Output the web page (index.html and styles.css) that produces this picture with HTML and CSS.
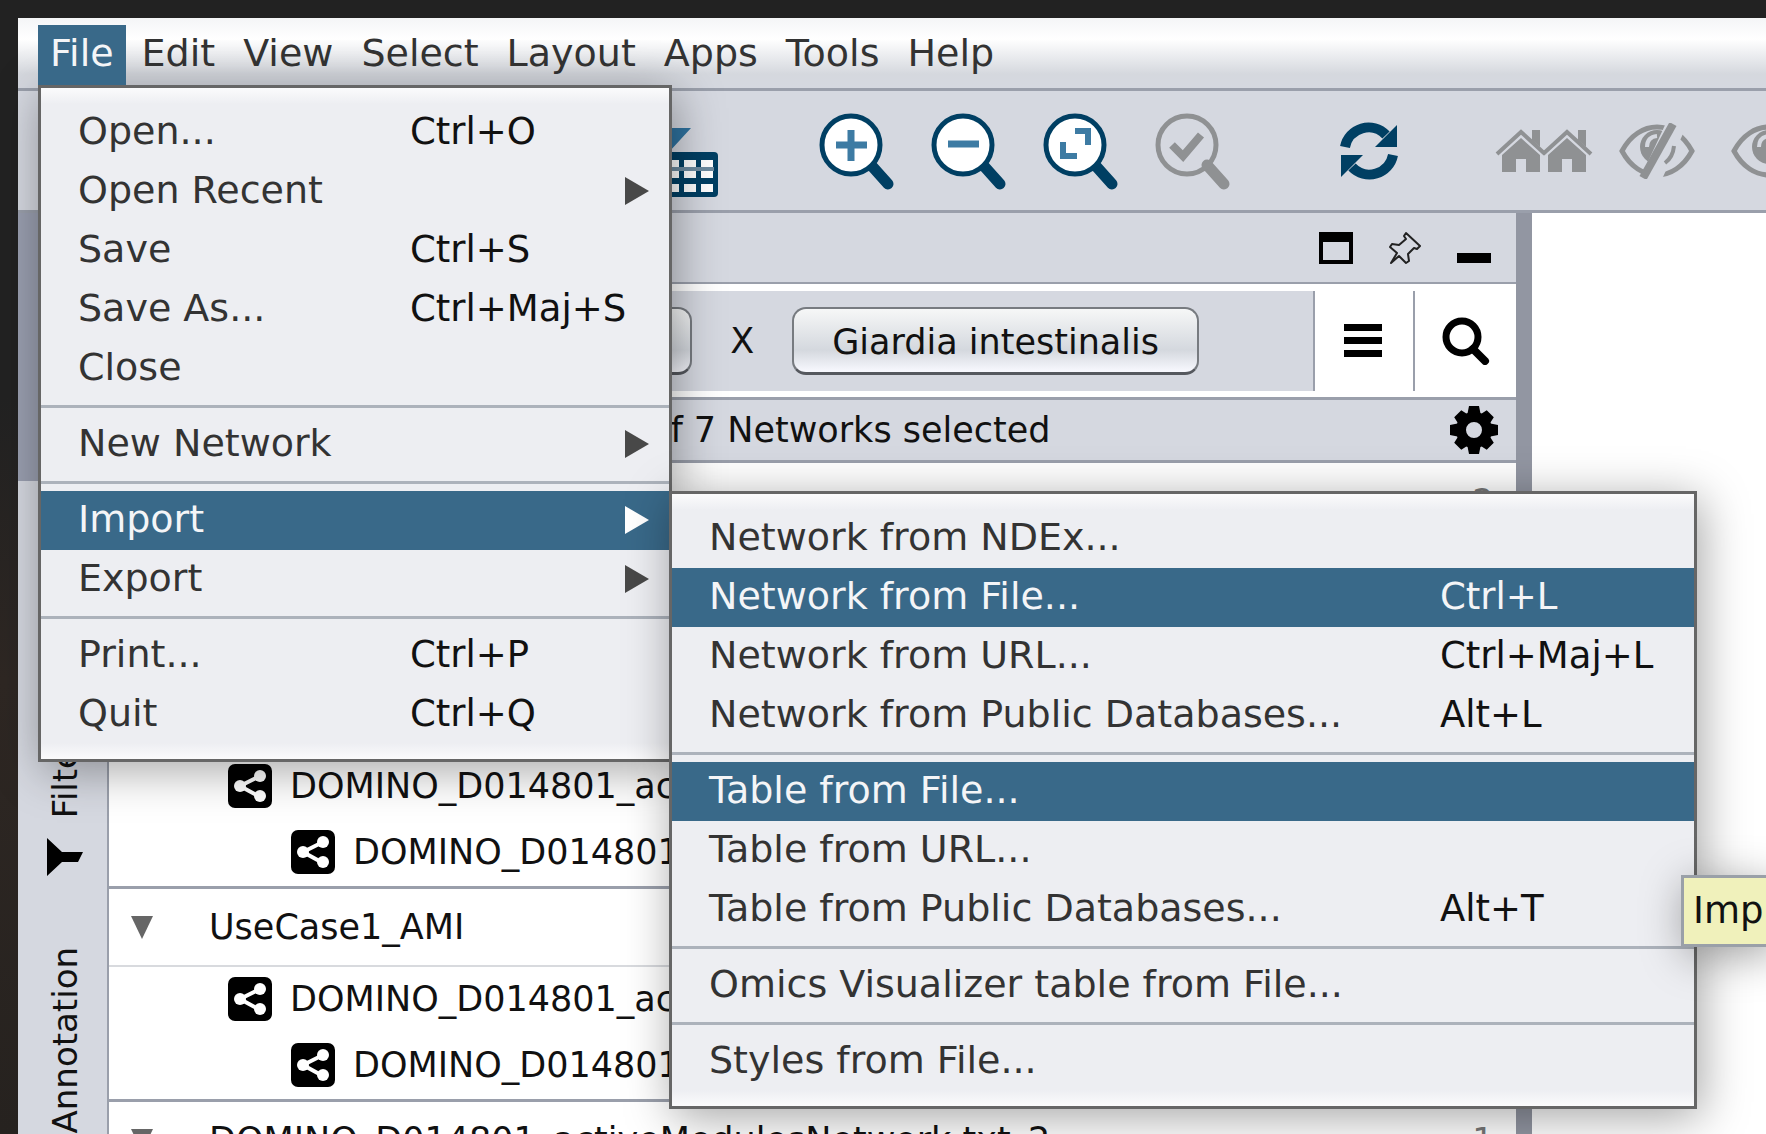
FILE: index.html
```html
<!DOCTYPE html>
<html lang="en">
<head>
<meta charset="utf-8">
<title>Network workspace</title>
<link rel="stylesheet" href="styles.css">
</head>
<body>
<svg class="defs" aria-hidden="true">
  <symbol id="lens" viewBox="0 0 80 80">
    <path d="M53 54 L70 73" stroke="currentColor" stroke-width="11" stroke-linecap="round" fill="none"/>
    <circle cx="33" cy="34" r="29" fill="var(--lens-fill)" stroke="currentColor" stroke-width="5"/>
  </symbol>
  <symbol id="net" viewBox="0 0 44 44">
    <rect width="44" height="44" rx="7"/>
    <path d="M32 12 L12 22 L32 33" stroke="#fff" stroke-width="4" fill="none"/>
    <circle cx="32" cy="12" r="6" fill="#fff"/><circle cx="12" cy="22" r="6" fill="#fff"/><circle cx="32" cy="32" r="6" fill="#fff"/>
  </symbol>
  <symbol id="eye" viewBox="0 0 76 56">
    <path d="M3 28 C20 -4 56 -4 73 28 C56 60 20 60 3 28 Z" fill="none" stroke="currentColor" stroke-width="5"/>
    <circle cx="38" cy="24" r="17" fill="currentColor"/>
    <path d="M28 24 Q28 14 38 13" fill="none" stroke="#d5d8e0" stroke-width="4"/>
  </symbol>
  <symbol id="house" viewBox="0 0 52 44">
    <path d="M2 25 L26 3 L50 25" fill="none" stroke="currentColor" stroke-width="4"/>
    <path d="M37 1 H45 V18 L37 11 Z" fill="currentColor"/>
    <path d="M7 26 L26 9 L45 26 V43 H31 V30 H21 V43 H7 Z" fill="currentColor"/>
  </symbol>
</svg>

<div class="desktop">
  <div class="app">
    <nav class="menubar">
      <div class="menubar-slot">
        <button class="menubar-item open">File</button>
        <div class="menu file-menu">
          <button class="item"><span>Open...</span><kbd>Ctrl+O</kbd></button>
          <button class="item"><span>Open Recent</span><i class="arrow"></i></button>
          <button class="item"><span>Save</span><kbd>Ctrl+S</kbd></button>
          <button class="item"><span>Save As...</span><kbd>Ctrl+Maj+S</kbd></button>
          <button class="item"><span>Close</span></button>
          <hr>
          <button class="item"><span>New Network</span><i class="arrow"></i></button>
          <hr>
          <div class="sub">
            <button class="item active"><span>Import</span><i class="arrow"></i></button>
            <div class="menu import-menu">
              <button class="item"><span>Network from NDEx...</span></button>
              <button class="item active"><span>Network from File...</span><kbd>Ctrl+L</kbd></button>
              <button class="item"><span>Network from URL...</span><kbd>Ctrl+Maj+L</kbd></button>
              <button class="item"><span>Network from Public Databases...</span><kbd>Alt+L</kbd></button>
              <hr>
              <button class="item active"><span>Table from File...</span></button>
              <button class="item"><span>Table from URL...</span></button>
              <div class="sub">
                <button class="item"><span>Table from Public Databases...</span><kbd>Alt+T</kbd></button>
                <div class="tooltip">Imp</div>
              </div>
              <hr>
              <button class="item"><span>Omics Visualizer table from File...</span></button>
              <hr>
              <button class="item"><span>Styles from File...</span></button>
            </div>
          </div>
          <button class="item"><span>Export</span><i class="arrow"></i></button>
          <hr>
          <button class="item"><span>Print...</span><kbd>Ctrl+P</kbd></button>
          <button class="item"><span>Quit</span><kbd>Ctrl+Q</kbd></button>
        </div>
      </div>
      <button class="menubar-item">Edit</button>
      <button class="menubar-item">View</button>
      <button class="menubar-item">Select</button>
      <button class="menubar-item">Layout</button>
      <button class="menubar-item">Apps</button>
      <button class="menubar-item">Tools</button>
      <button class="menubar-item">Help</button>
    </nav>

    <div class="toolbar">
      <button class="tool" aria-label="Import table">
        <svg width="94" height="94" viewBox="0 0 94 94">
          <path d="M39 14 H48 V24 H67 L45 48 L23 24 H39 Z" fill="#2f73a0"/>
          <rect x="4" y="48" width="90" height="45" rx="4" fill="#003f63"/>
          <path d="M8 56h12v18H8zM25 56h12v18H25zM43 56h12v18H43zM60 56h12v18H60zM77 56h12v18H77z" fill="#fff"/>
          <path d="M8 65H90" stroke="#6d8ba0" stroke-width="4"/>
          <path d="M8 80h12v8H8zM25 80h12v8H25zM43 80h12v8H43zM60 80h12v8H60zM77 80h12v8H77z" fill="#fff"/>
        </svg>
      </button>
      <div class="tools zoom-tools">
        <button class="tool" aria-label="Zoom in"><svg width="80" height="80"><use href="#lens"/><path d="M33 19v31M18 34h31" stroke="#3d7ba3" stroke-width="7"/></svg></button>
        <button class="tool" aria-label="Zoom out"><svg width="80" height="80"><use href="#lens"/><path d="M18 33h31" stroke="#3d7ba3" stroke-width="7"/></svg></button>
        <button class="tool" aria-label="Fit content"><svg width="80" height="80"><use href="#lens"/><path d="M33 20h13v14M21 31v14h14" fill="none" stroke="#3d7ba3" stroke-width="6"/></svg></button>
        <button class="tool disabled" aria-label="Fit selected"><svg width="80" height="80"><use href="#lens"/><path d="M18 34l11 11L47 24" fill="none" stroke="currentColor" stroke-width="8"/></svg></button>
      </div>
      <button class="tool refresh" aria-label="Refresh">
        <svg width="58" height="58" viewBox="0 0 58 58"><path d="M5 25 A24 24 0 0 1 46 13" fill="none" stroke="currentColor" stroke-width="10"/><path d="M57 3V25H35z" fill="currentColor"/><path d="M53 33 A24 24 0 0 1 12 45" fill="none" stroke="currentColor" stroke-width="10"/><path d="M1 55V33H23z" fill="currentColor"/></svg>
      </button>
      <div class="tools view-tools">
        <button class="tool disabled" aria-label="First neighbors"><svg width="98" height="44"><use href="#house" width="52" height="44"/><use href="#house" x="46" width="52" height="44"/></svg></button>
        <button class="tool disabled" aria-label="Hide selected"><svg width="76" height="56"><use href="#eye"/><path d="M58 0L32 56" stroke="#d5d8e0" stroke-width="20"/><path d="M54 1L24 55" stroke="currentColor" stroke-width="8"/><path d="M55 23Q54 34 46 40" fill="none" stroke="currentColor" stroke-width="4"/></svg></button>
        <button class="tool disabled" aria-label="Show all"><svg width="76" height="56"><use href="#eye"/></svg></button>
      </div>
    </div>

    <div class="workspace">
      <aside class="tabs">
        <button class="tab selected" aria-label="Network"></button>
        <button class="tab style-tab" aria-label="Style"></button>
        <button class="tab filter-tab"><span>Filter</span><svg width="36" height="38" viewBox="0 0 36 38"><path d="M0 0L15 14H36L31 24H15L0 38z"/></svg></button>
        <button class="tab note-tab"><span>Annotation</span></button>
      </aside>

      <section class="panel">
        <header class="panel-head">
          <button aria-label="Float"><svg width="34" height="32"><path fill-rule="evenodd" d="M0 0H34V32H0zM4 10V28H30V10z"/></svg></button>
          <button aria-label="Pin"><svg width="34" height="34" viewBox="0 0 34 34"><path d="M18 2L32 15L29 18L26 17L20 23L21 30L18 32L11 25L3 32L9 22L2 16L4 13L11 14L18 8L16 5Z" fill="none" stroke="#222" stroke-width="2" stroke-linejoin="round"/></svg></button>
          <button aria-label="Minimize"><svg width="34" height="32"><path d="M0 21H34V31H0z"/></svg></button>
        </header>
        <div class="species">
          <div class="species-list">
            <button class="chip" aria-label="Species"></button>
            <span>X</span>
            <button class="chip">Giardia intestinalis</button>
          </div>
          <button class="species-action list" aria-label="List"><svg width="38" height="34"><path d="M0 0H38V7H0zM0 13H38V20H0zM0 26H38V33H0z"/></svg></button>
          <button class="species-action find" aria-label="Search"><svg width="48" height="48"><circle cx="20" cy="20" r="16" fill="none" stroke="#000" stroke-width="7"/><path d="M31 32L43 44" stroke="#000" stroke-width="8" stroke-linecap="round"/></svg></button>
        </div>
        <div class="status">
          <span>of 7 Networks selected</span>
          <button aria-label="Settings"><svg width="48" height="48" viewBox="-24 -24 48 48"><circle r="13" fill="none" stroke="#000" stroke-width="10"/><path d="M-5 -24H5L7 -14H-7zM-5 24H5L7 14H-7zM-24 -5V5L-14 7V-7zM24 -5V5L14 7V-7z"/><path transform="rotate(45)" d="M-5 -23H5L7 -14H-7zM-5 23H5L7 14H-7zM-23 -5V5L-14 7V-7zM23 -5V5L14 7V-7z"/></svg></button>
        </div>
        <div class="tree">
          <div class="group">
            <div class="group-head"><i class="caret"></i><span></span><small>2</small></div>
          </div>
          <div class="group">
            <div class="group-head"><i class="caret"></i></div>
            <div class="node"><svg width="44" height="44"><use href="#net"/></svg>DOMINO_D014801_ac</div>
            <div class="node child"><svg width="44" height="44"><use href="#net"/></svg>DOMINO_D014801</div>
          </div>
          <div class="group">
            <div class="group-head"><i class="caret"></i><span>UseCase1_AMI</span></div>
            <div class="node"><svg width="44" height="44"><use href="#net"/></svg>DOMINO_D014801_ac</div>
            <div class="node child"><svg width="44" height="44"><use href="#net"/></svg>DOMINO_D014801</div>
          </div>
          <div class="group">
            <div class="group-head"><i class="caret"></i><span>DOMINO_D014801_activeModulesNetwork.txt_2</span><small>1</small></div>
          </div>
        </div>
      </section>
      <main class="canvas"></main>
    </div>
  </div>
</div>
</body>
</html>
```
FILE: styles.css
```css
* { box-sizing: border-box; }

:root {
  --face: #d5d8e0;
  --line: #9a9fab;
  --select: #396989;
  --navy: #003f63;
  --shadow: 4px 8px 44px rgba(0, 0, 0, 0.36);
}

body {
  margin: 0;
  font-family: "DejaVu Sans", sans-serif;
  color: #111;
  overflow: hidden;
}

button {
  margin: 0;
  padding: 0;
  border: 0;
  background: none;
  font: inherit;
  color: inherit;
}

svg { display: block; }
.defs { display: none; }

.desktop {
  height: 100vh;
  padding: 18px 0 0 18px;
  background: linear-gradient(#222, #222 35%, #2e2723 60%, #26221f);
  overflow: hidden;
}

.app {
  display: flex;
  flex-direction: column;
  height: 100%;
  background: var(--face);
}

/* Menu bar */
.menubar {
  position: relative;
  z-index: 2;
  display: flex;
  gap: 4px;
  padding: 7px 20px 3px;
  border-bottom: 3px solid var(--line);
  background: linear-gradient(#f4f5f7, #fff 30%, #d5d8de 80%, var(--face));
}

.menubar-slot { position: relative; }

.menubar-item {
  display: block;
  padding: 0 12px 4px;
  font-size: 38px;
  line-height: 56px;
  color: #333;
}

.menubar-item.open {
  position: relative;
  z-index: 1;
  background: var(--select);
  color: #f4f5f7;
}

/* Menus */
.menu {
  position: absolute;
  padding: 15px 0;
  border: 3px solid #666;
  background: linear-gradient(#fbfbfc, #edeef2 16px, #edeef2 calc(100% - 16px), #fbfbfc);
  box-shadow: var(--shadow);
}

.file-menu { top: 100%; left: 0; width: 634px; --keys: 259px; }
.import-menu { top: 0; left: 100%; width: 1028px; --keys: 254px; }
.sub { position: relative; }

.item {
  display: grid;
  grid-template-columns: 1fr var(--keys);
  align-items: center;
  width: 100%;
  padding: 0 0 2px 37px;
  font-size: 38px;
  line-height: 57px;
  text-align: left;
  white-space: nowrap;
  color: #333;
}

.item.active { background: var(--select); color: #f4f5f7; }

.item kbd {
  font-family: inherit;
  font-size: 37px;
  color: #111;
}

.item.active kbd { color: #f4f5f7; }

.arrow {
  justify-self: end;
  margin-right: 20px;
  border: solid transparent;
  border-width: 14px 0 14px 24px;
  border-left-color: #484848;
}

.active .arrow { border-left-color: #fff; }

.menu hr {
  margin: 7px 0;
  border: 0;
  border-top: 3px solid #acb2bb;
}

.tooltip {
  position: absolute;
  top: -5px;
  left: 1009px;
  padding: 0 9px;
  border: 3px solid #9aa0a8;
  background: #f0f1bb;
  box-shadow: var(--shadow);
  font-size: 37px;
  line-height: 66px;
}

/* Toolbar */
.toolbar {
  display: flex;
  align-items: center;
  height: 122px;
  flex: none;
  padding-left: 606px;
  border-bottom: 3px solid var(--line);
  overflow: hidden;
  color: var(--navy);
}

.tool { flex: none; --lens-fill: #fff; }
.tool.disabled { color: #8f9193; --lens-fill: none; }
.tools { display: flex; flex: none; align-items: center; }
.zoom-tools { gap: 32px; margin-left: 100px; }
.refresh { margin-left: 106px; }
.view-tools { gap: 26px; margin-left: 97px; }
.view-tools .tool + .tool + .tool { margin-left: 10px; }

/* Side tabs */
.workspace { display: flex; flex: 1; min-height: 0; overflow: hidden; }

.tabs {
  flex: none;
  width: 91px;
  border-right: 2px solid var(--line);
}

.tab {
  display: flex;
  flex-direction: column;
  align-items: center;
  justify-content: flex-end;
  gap: 20px;
  width: 100%;
  padding-left: 4px;
  font-size: 34px;
  line-height: 40px;
}

.tab span { writing-mode: vertical-rl; transform: rotate(180deg); }
.tab.selected { height: 268px; background: #9a9fb0; }
.style-tab { height: 200px; }
.filter-tab { height: 195px; }
.note-tab { height: 257px; }

/* Network panel */
.panel { flex: 1; min-width: 0; background: #fff; }

.panel-head {
  display: flex;
  justify-content: flex-end;
  align-items: center;
  gap: 35px;
  height: 71px;
  padding: 0 25px 0 0;
  border-bottom: 2px solid var(--line);
  background: var(--face);
}

.species {
  display: flex;
  height: 113px;
  padding: 7px 0 6px;
}

.species-list {
  display: flex;
  flex: 1;
  align-items: center;
  justify-content: flex-end;
  gap: 38px;
  padding-right: 114px;
  border-right: 2px solid var(--line);
  background: var(--face);
  font-size: 35px;
}

.chip {
  height: 68px;
  min-width: 160px;
  padding: 2px 38px 0;
  border: 2px solid #777b80;
  border-bottom: 3px solid #55585e;
  border-radius: 14px;
  background: linear-gradient(#f6f7f7, #d4d8de 65%, #f8f9ff);
}

.species-action { display: grid; place-items: center; width: 101px; }
.species-action.list { width: 100px; padding-right: 2px; border-right: 2px solid var(--line); }

.status {
  display: flex;
  align-items: center;
  justify-content: space-between;
  height: 63px;
  padding: 0 18px 0 540px;
  border-top: 3px solid var(--line);
  background: var(--face);
  font-size: 35px;
}

/* Network tree */
.tree { font-size: 35px; white-space: nowrap; }
.group { min-height: 213px; border-top: 3px solid var(--line); }

.group-head {
  display: flex;
  align-items: center;
  height: 78px;
  padding: 0 22px;
  border-bottom: 2px solid #d8dade;
}

.group-head span { flex: 1; padding-left: 56px; }
.group-head small { font-size: 34px; color: #777; }

.caret {
  border: solid transparent;
  border-width: 23px 11px 0;
  border-top-color: #666;
}

.node {
  display: flex;
  align-items: center;
  gap: 18px;
  height: 66px;
  padding: 0 0 2px 119px;
}

.node.child { padding-left: 182px; }

.canvas {
  flex: none;
  width: 250px;
  border-left: 16px solid #9296a2;
  background: #fff;
}
```
